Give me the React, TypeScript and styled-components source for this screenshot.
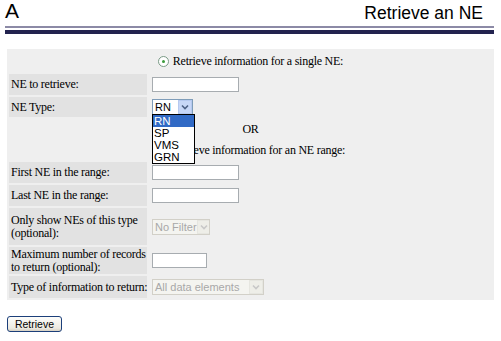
import React from "react";
import styled, { createGlobalStyle } from "styled-components";

const Global = createGlobalStyle`
  html, body { margin: 0; padding: 0; background: #ffffff; }
  body { font-family: "Liberation Serif", "Times New Roman", serif; color: #000; }
`;

const Page = styled.div`
  width: 501px;
  height: 341px;
  padding: 0 7px 0 5px;
  box-sizing: border-box;
  overflow: hidden;
`;

const Header = styled.header`
  display: flex;
  justify-content: space-between;
  align-items: flex-end;
  height: 25px;
  font-family: "Liberation Sans", Arial, sans-serif;
`;

const Letter = styled.span`
  font-size: 21px;
  line-height: 21px;
  padding-bottom: 4px;
`;

const Title = styled.h1`
  margin: 0 11px 0 0;
  font-size: 17.5px;
  font-weight: normal;
  line-height: 18px;
  padding-bottom: 3px;
`;

const Rule = styled.div`
  height: 2px;
  background: #8c8aa6;
  margin-top: 1px;
  border-bottom: 2px solid #fff;
  box-shadow: 0 4px 0 0 #23234f;
`;

const Panel = styled.form`
  position: relative;
  margin: 19px 0 0 2px;
  background: #efefef;
  padding: 2px;
  display: grid;
  grid-template-columns: 138px 1fr;
  grid-template-rows: 21px 21px 20px 20px 19px 21px 21px 37px 27px 22px;
  gap: 2px;
  font-size: 12px;
  letter-spacing: -0.25px;
`;

const Label = styled.div`
  background: #e2e2e2;
  display: flex;
  align-items: center;
  padding: 0 2px;
  line-height: 13px;
  white-space: nowrap;
`;

const Value = styled.div`
  display: flex;
  align-items: center;
  padding-left: 3px;
  position: relative;
`;

const Span = styled.div`
  grid-column: 1 / -1;
  display: flex;
  align-items: center;
  justify-content: center;
  gap: 4px;
  white-space: nowrap;
`;

const Radio = styled.span`
  width: 9px;
  height: 9px;
  border-radius: 50%;
  border: 1px solid #7a9a86;
  background: #fff;
  display: inline-flex;
  align-items: center;
  justify-content: center;
  &::after {
    content: "";
    width: 3px;
    height: 3px;
    border-radius: 50%;
    background: #3a9a3a;
  }
`;

const TextBox = styled.div<{ w: number }>`
  width: ${(p) => p.w}px;
  height: 15px;
  box-sizing: border-box;
  border: 1px solid #a7acb0;
  background: #fff;
`;

const Select = styled.div<{ w: number; disabled?: boolean }>`
  width: ${(p) => p.w}px;
  height: 16px;
  box-sizing: border-box;
  border: 1px solid ${(p) => (p.disabled ? "#d2d0c8" : "#7f9db9")};
  background: ${(p) => (p.disabled ? "#f4f4f0" : "#fff")};
  display: flex;
  align-items: center;
  justify-content: space-between;
  font-family: "Liberation Sans", Arial, sans-serif;
  font-size: 11px;
  letter-spacing: 0;
  white-space: nowrap;
  overflow: hidden;
  color: ${(p) => (p.disabled ? "#a8a8a8" : "#000")};
  padding-left: 2px;
`;

const Arrow = styled.span<{ disabled?: boolean }>`
  flex: none;
  width: 14px;
  height: 14px;
  box-sizing: border-box;
  background: ${(p) => (p.disabled ? "#eeeee8" : "#c7d7f7")};
  border: 1px solid ${(p) => (p.disabled ? "#e6e6e0" : "#b6c9ef")};
  display: flex;
  align-items: center;
  justify-content: center;
`;

const DropList = styled.ul`
  position: absolute;
  left: 3px;
  top: 17px;
  z-index: 2;
  width: 43px;
  margin: 0;
  padding: 0;
  list-style: none;
  border: 1px solid #000;
  background: #fff;
  font-family: "Liberation Sans", Arial, sans-serif;
  font-size: 11.5px;
  letter-spacing: 0;
  line-height: 12px;
  box-sizing: border-box;
`;

const Option = styled.li<{ selected?: boolean }>`
  height: 12px;
  padding-left: 1px;
  background: ${(p) => (p.selected ? "#316ac5" : "#fff")};
  color: ${(p) => (p.selected ? "#fff" : "#000")};
`;

const Button = styled.button`
  margin: 16px 0 0 2px;
  width: 55px;
  height: 16px;
  padding: 0;
  font-family: "Liberation Sans", Arial, sans-serif;
  font-size: 10.5px;
  line-height: 12px;
  color: #000;
  border: 1px solid #1c3f7a;
  border-radius: 3px;
  background: linear-gradient(#fdfdfb, #ece9e0 80%, #d6d0c2);
`;

const Chevron = ({ color }: { color: string }) => (
  <svg width="8" height="6" viewBox="0 0 8 6">
    <path d="M1 1.5 L4 4.5 L7 1.5" fill="none" stroke={color} strokeWidth="1.6" />
  </svg>
);

export default function App() {
  return (
    <>
      <Global />
      <Page>
        <Header>
          <Letter>A</Letter>
          <Title>Retrieve an NE</Title>
        </Header>
        <Rule />
        <Panel>
          <Span>
            <Radio />
            <span>Retrieve information for a single NE:</span>
          </Span>
          <Label>NE to retrieve:</Label>
          <Value>
            <TextBox w={87} />
          </Value>
          <Label>NE Type:</Label>
          <Value>
            <Select w={41}>
              RN
              <Arrow>
                <Chevron color="#4d6185" />
              </Arrow>
            </Select>
            <DropList>
              <Option selected>RN</Option>
              <Option>SP</Option>
              <Option>VMS</Option>
              <Option>GRN</Option>
            </DropList>
          </Value>
          <Span>OR</Span>
          <Span>
            <Radio />
            <span>Retrieve information for an NE range:</span>
          </Span>
          <Label>First NE in the range:</Label>
          <Value>
            <TextBox w={87} />
          </Value>
          <Label>Last NE in the range:</Label>
          <Value>
            <TextBox w={87} />
          </Value>
          <Label>
            Only show NEs of this type
            <br />
            (optional):
          </Label>
          <Value>
            <Select w={58} disabled>
              No Filter
              <Arrow disabled>
                <Chevron color="#c8c8c8" />
              </Arrow>
            </Select>
          </Value>
          <Label>
            Maximum number of records
            <br />
            to return (optional):
          </Label>
          <Value>
            <TextBox w={55} />
          </Value>
          <Label>Type of information to return:</Label>
          <Value>
            <Select w={112} disabled>
              All data elements
              <Arrow disabled>
                <Chevron color="#c8c8c8" />
              </Arrow>
            </Select>
          </Value>
        </Panel>
        <Button type="button">Retrieve</Button>
      </Page>
    </>
  );
}
